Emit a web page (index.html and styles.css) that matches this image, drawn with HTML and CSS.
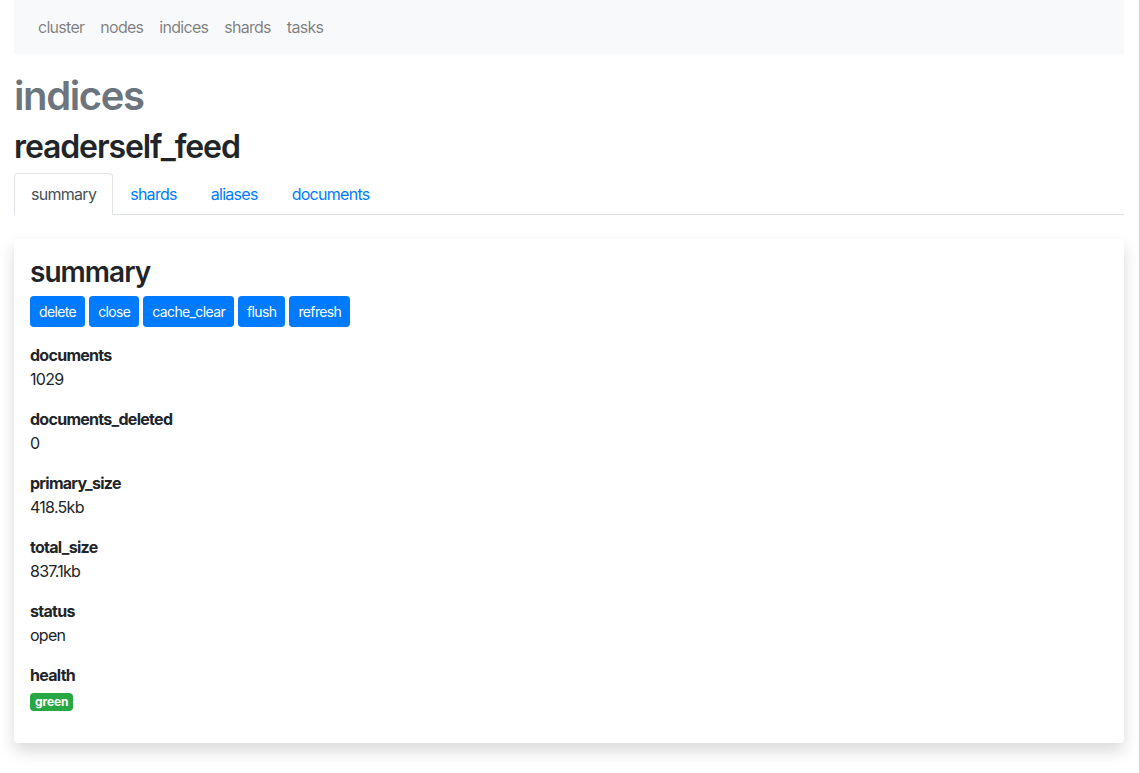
FILE: index.html
```html
<!DOCTYPE html>
<html lang="en">
<head>
<meta charset="utf-8">
<title>indices - readerself_feed</title>
<link rel="stylesheet" href="styles.css">
</head>
<body>
<div class="page">
  <nav class="navbar">
    <a class="nav-link" href="#">cluster</a>
    <a class="nav-link" href="#">nodes</a>
    <a class="nav-link" href="#">indices</a>
    <a class="nav-link" href="#">shards</a>
    <a class="nav-link" href="#">tasks</a>
  </nav>
  <h1 class="title">indices</h1>
  <h2 class="subtitle">readerself_feed</h2>
  <ul class="tabs">
    <li><a class="tab active" href="#">summary</a></li>
    <li><a class="tab" href="#">shards</a></li>
    <li><a class="tab" href="#">aliases</a></li>
    <li><a class="tab" href="#">documents</a></li>
  </ul>
  <div class="card">
    <h3 class="card-title">summary</h3>
    <div class="actions">
      <button class="btn">delete</button>
      <button class="btn">close</button>
      <button class="btn">cache_clear</button>
      <button class="btn">flush</button>
      <button class="btn">refresh</button>
    </div>
    <dl class="props">
      <dt>documents</dt>
      <dd>1029</dd>
      <dt>documents_deleted</dt>
      <dd>0</dd>
      <dt>primary_size</dt>
      <dd>418.5kb</dd>
      <dt>total_size</dt>
      <dd>837.1kb</dd>
      <dt>status</dt>
      <dd>open</dd>
      <dt>health</dt>
      <dd><span class="badge">green</span></dd>
    </dl>
  </div>
</div>
</body>
</html>
```

FILE: styles.css
```css
body {
  margin: 0;
  min-height: 100vh;
  box-sizing: border-box;
  border-right: 1px solid #d6d6d6;
  font-family: Inter, "Noto Sans", "Liberation Sans", sans-serif;
  font-size: 16px;
  line-height: 1.5;
  letter-spacing: -0.045em;
  color: #212529;
  background: #fff;
}
.page {
  padding: 0 15px 30px 14px;
}
.navbar {
  display: flex;
  align-items: center;
  height: 54px;
  padding: 0 16px;
  background: #f8f9fa;
}
.nav-link {
  padding: 7px 8px;
  color: rgba(0, 0, 0, 0.5);
  text-decoration: none;
}
.title {
  margin: 18px 0 8px;
  font-size: 40px;
  font-weight: 600;
  line-height: 1.2;
  letter-spacing: -0.035em;
  color: #6c757d;
}
.subtitle {
  margin: 0 0 7px;
  font-size: 32px;
  font-weight: 600;
  line-height: 1.2;
  letter-spacing: -0.035em;
  color: #212529;
}
.tabs {
  display: flex;
  list-style: none;
  margin: 0;
  padding: 0;
  border-bottom: 1px solid #dee2e6;
}
.tabs li {
  margin-bottom: -1px;
}
.tab {
  display: block;
  padding: 8px 16px;
  border: 1px solid transparent;
  border-radius: 4px 4px 0 0;
  color: #007bff;
  text-decoration: none;
}
.tab.active {
  color: #495057;
  background: #fff;
  border-color: #dee2e6 #dee2e6 #fff;
}
.card {
  margin-top: 24px;
  padding: 17px 16px 16px;
  background: #fff;
  border-radius: 4px;
  box-shadow: 0 8px 16px rgba(0, 0, 0, 0.15);
}
.card-title {
  margin: 0 0 6px;
  font-size: 28px;
  font-weight: 600;
  line-height: 1.2;
  letter-spacing: -0.035em;
}
.actions {
  display: flex;
  gap: 4px;
}
.btn {
  font-family: inherit;
  font-size: 14px;
  line-height: 21px;
  letter-spacing: -0.045em;
  padding: 4px 8px;
  border: 1px solid #007bff;
  border-radius: 3.2px;
  background: #007bff;
  color: #fff;
  cursor: pointer;
}
.props {
  margin: 16px 0 0;
}
.props dt {
  font-weight: 700;
}
.props dd {
  margin: 0 0 16px;
}
.badge {
  display: inline-block;
  box-sizing: border-box;
  height: 18px;
  padding: 0 5px;
  font-size: 12px;
  font-weight: 700;
  line-height: 18px;
  letter-spacing: -0.01em;
  color: #fff;
  background: #28a745;
  border-radius: 4px;
  vertical-align: -1px;
}
```
